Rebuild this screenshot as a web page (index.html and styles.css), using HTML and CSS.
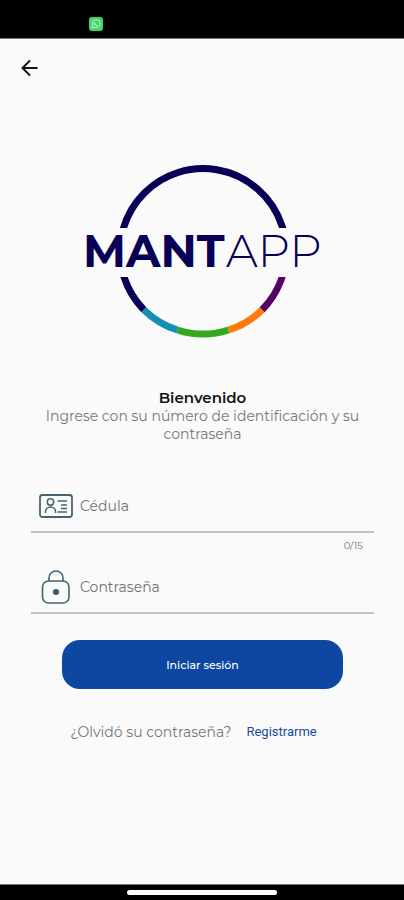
FILE: index.html
```html
<!DOCTYPE html>
<html lang="es">
<head>
<meta charset="utf-8">
<meta name="viewport" content="width=device-width, initial-scale=1">
<title>MANTAPP</title>
<link rel="stylesheet" href="styles.css">
</head>
<body>
<div class="status-bar">
  <svg class="notification" viewBox="0 0 14 14" aria-hidden="true">
    <rect width="14" height="14" rx="3" fill="#43d467"/>
    <path d="M3 11l.6-2.2A4.1 4.1 0 1 1 5.200 10.400z" fill="none" stroke="#c4f7cf" stroke-width="1"/>
    <path d="M5.400 5.200c0 2 1.400 3.400 3.400 3.500" fill="none" stroke="#c4f7cf" stroke-width="1.200"/>
  </svg>
</div>
<header class="top-bar">
  <button class="back" type="button" aria-label="Volver">
    <svg viewBox="0 0 18 18" aria-hidden="true"><path d="M16.500 9H2M9 1.500L1.500 9 9 16.500" fill="none" stroke="#151515" stroke-width="2"/></svg>
  </button>
</header>
<main class="content">
  <svg class="logo" viewBox="0 0 240 174" role="img" aria-label="MANTAPP">
    <defs>
      <clipPath id="ring"><path d="M0 0H240V64H0zM0 113H240V174H0z"/></clipPath>
    </defs>
    <g clip-path="url(#ring)" fill="none" stroke-width="7">
      <path d="M60.800 145.700A83 83 0 1 1 202 101" stroke="#080056"/>
      <path d="M60.800 145.700A83 83 0 0 0 94.500 166" stroke="#168fb3"/>
      <path d="M94.500 166A83 83 0 0 0 145.500 166" stroke="#35a821"/>
      <path d="M145.500 166A83 83 0 0 0 179.200 145.700" stroke="#ff790b"/>
      <path d="M179.200 145.700A83 83 0 0 0 203 87" stroke="#560066"/>
    </g>
    <text class="logo-bold" x="0" y="103">MANT</text>
    <text class="logo-thin" x="143" y="103">APP</text>
  </svg>
  <h1 class="title">Bienvenido</h1>
  <p class="intro">Ingrese con su número de identificación y su contraseña</p>
  <form class="form">
    <label class="field">
      <svg class="icon" viewBox="0 0 34 34" fill="none" stroke="#446472" stroke-width="1.500" aria-hidden="true">
        <rect x="1" y="6" width="32" height="22" rx="2.500" stroke-width="1.800"/>
        <circle cx="11.500" cy="13" r="3.200"/>
        <path d="M6.500 24v-1.500a5 4.500 0 0 1 10 0V24M18.500 12H28M22 16h6M22 19.500h6M18.500 23H28"/>
      </svg>
      <input type="text" inputmode="numeric" maxlength="15" placeholder="Cédula" aria-label="Cédula">
    </label>
    <span class="counter">0/15</span>
    <label class="field">
      <svg class="icon" viewBox="0 0 34 34" fill="none" stroke="#446472" stroke-width="1.600" aria-hidden="true">
        <path d="M10 11V8a7 7 0 0 1 14 0v3"/>
        <rect x="3.500" y="11" width="26.500" height="22" rx="6"/>
        <circle cx="17" cy="22" r="3" fill="#365969" stroke="none"/>
      </svg>
      <input type="password" placeholder="Contraseña" aria-label="Contraseña">
    </label>
    <button class="submit" type="submit">Iniciar sesión</button>
  </form>
  <nav class="links">
    <a class="forgot" href="#recuperar">¿Olvidó su contraseña?</a>
    <a class="register" href="#registro">Registrarme</a>
  </nav>
</main>
<footer class="home-bar"><span class="home-handle"></span></footer>
</body>
</html>
```
FILE: styles.css
```css
* { box-sizing: border-box; }

body {
  display: flex;
  flex-direction: column;
  min-height: 100vh;
  margin: 0;
  background: #fafafa;
  color: #777;
  font: 14px/18px Montserrat, Inter, sans-serif;
}

.status-bar {
  display: flex;
  align-items: flex-end;
  height: 39px;
  padding: 0 89px 7px;
  background: #000;
  border-bottom: 1px solid #777;
}

.notification { width: 14px; height: 14px; }

.top-bar { padding: 12px 13px; }

.back {
  display: flex;
  align-items: center;
  justify-content: center;
  width: 34px;
  height: 34px;
  padding: 0;
  border: 0;
  background: none;
}

.back svg { width: 18px; height: 18px; }

.content {
  flex: 1;
  display: flex;
  flex-direction: column;
  align-items: center;
  padding: 67px 30px 24px 31px;
}

.logo { width: 240px; height: 174px; overflow: visible; }
.logo text { font-family: Montserrat, Inter, sans-serif; font-size: 45px; fill: #080056; }
.logo .logo-bold { font-weight: 700; }
.logo .logo-thin { font-weight: 300; }

.title {
  margin: 51px 0 0;
  color: #111;
  font-size: 15px;
  font-weight: 600;
  line-height: 18px;
}

.intro { max-width: 320px; margin: 0; text-align: center; }

.form {
  display: flex;
  flex-direction: column;
  align-self: stretch;
  margin-top: 38px;
}

.field {
  display: flex;
  align-items: center;
  gap: 7px;
  height: 52px;
  padding: 0 8px;
  border-bottom: 2px solid #c2c2c2;
}

.icon { flex: none; width: 34px; height: 34px; }

.field input {
  flex: 1;
  min-width: 0;
  padding: 0;
  border: 0;
  outline: 0;
  background: none;
  color: #333;
  font: inherit;
}

.field input::placeholder { color: #707070; opacity: 1; }

.counter {
  align-self: flex-end;
  height: 29px;
  padding: 4px 11px 0 0;
  font-size: 10px;
}

.submit {
  height: 49px;
  margin: 26px 31px 0;
  border: 0;
  border-radius: 18px;
  background: #0d47a1;
  color: #fff;
  font: 500 11px/16px Montserrat, Inter, sans-serif;
}

.links {
  display: flex;
  align-items: center;
  justify-content: center;
  gap: 15px;
  margin: 34px 18px 0 0;
}

.links a { text-decoration: none; }
.forgot { color: #777; }
.register { color: #174aa0; font-family: Roboto, sans-serif; font-size: 13px; }

.home-bar {
  display: flex;
  justify-content: center;
  height: 16px;
  padding-top: 5px;
  background: #000;
  border-top: 1px solid #777;
}

.home-handle { width: 150px; height: 5px; border-radius: 3px; background: #fff; }
```
